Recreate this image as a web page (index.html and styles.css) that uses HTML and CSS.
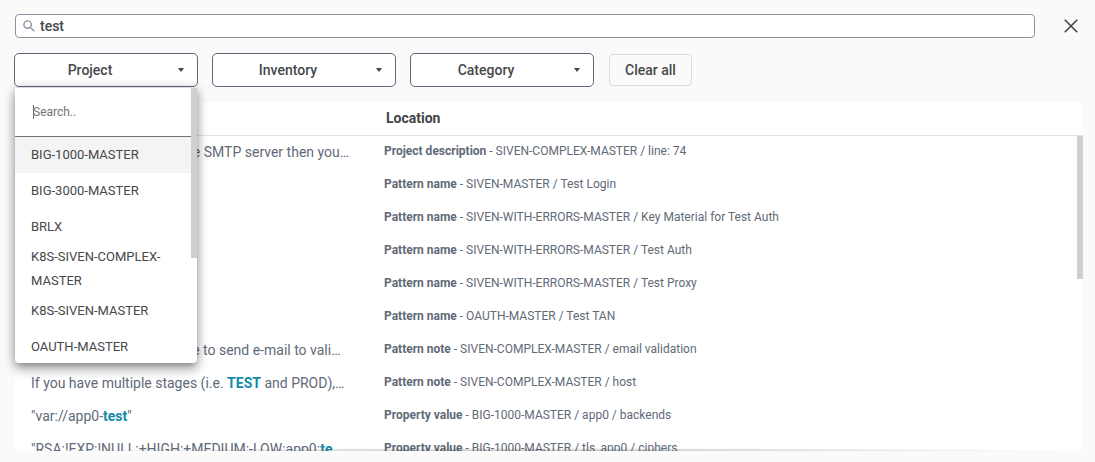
FILE: index.html
```html
<!DOCTYPE html>
<html lang="en">
<head>
<meta charset="utf-8">
<title>Search results</title>
<link rel="stylesheet" href="styles.css">
</head>
<body>
<main class="page">
  <div class="search-row">
    <label class="search-box">
      <svg class="search-icon" viewBox="0 0 12 12" aria-hidden="true"><circle cx="4.6" cy="4.6" r="3.7"/><path d="M7.4 7.4L11.4 11.2"/></svg>
      <input class="search-input" type="text" value="test" aria-label="Search">
    </label>
    <button class="close" type="button" aria-label="Close">
      <svg viewBox="0 0 14 14" aria-hidden="true"><path d="M.8 .8L13.2 13.2M13.2 .8L.8 13.2"/></svg>
    </button>
  </div>

  <div class="filters">
    <div class="filter">
      <button class="filter-button" type="button" aria-expanded="true"><span class="filter-label">Project</span><span class="arrow"></span></button>
      <div class="menu">
        <label class="menu-search"><input class="menu-input" type="text" placeholder="Search.." aria-label="Search projects"></label>
        <ul class="menu-list">
          <li class="menu-item active">BIG-1000-MASTER</li>
          <li class="menu-item">BIG-3000-MASTER</li>
          <li class="menu-item">BRLX</li>
          <li class="menu-item">K8S-SIVEN-COMPLEX-MASTER</li>
          <li class="menu-item">K8S-SIVEN-MASTER</li>
          <li class="menu-item">OAUTH-MASTER</li>
        </ul>
        <span class="menu-thumb"></span>
      </div>
    </div>
    <div class="filter"><button class="filter-button" type="button"><span class="filter-label">Inventory</span><span class="arrow"></span></button></div>
    <div class="filter"><button class="filter-button" type="button"><span class="filter-label">Category</span><span class="arrow"></span></button></div>
    <button class="clear" type="button">Clear all</button>
  </div>

  <section class="card">
    <table class="results">
      <thead><tr><th class="match"></th><th>Location</th></tr></thead>
      <tbody>
        <tr><td class="match">If you want to configure the SMTP server then you…</td><td><b>Project description</b> - SIVEN-COMPLEX-MASTER / line: 74</td></tr>
        <tr><td class="match"></td><td><b>Pattern name</b> - SIVEN-MASTER / Test Login</td></tr>
        <tr><td class="match"></td><td><b>Pattern name</b> - SIVEN-WITH-ERRORS-MASTER / Key Material for Test Auth</td></tr>
        <tr><td class="match"></td><td><b>Pattern name</b> - SIVEN-WITH-ERRORS-MASTER / Test Auth</td></tr>
        <tr><td class="match"></td><td><b>Pattern name</b> - SIVEN-WITH-ERRORS-MASTER / Test Proxy</td></tr>
        <tr><td class="match"></td><td><b>Pattern name</b> - OAUTH-MASTER / Test TAN</td></tr>
        <tr><td class="match">This test server will be able to send e-mail to vali…</td><td><b>Pattern note</b> - SIVEN-COMPLEX-MASTER / email validation</td></tr>
        <tr><td class="match">If you have multiple stages (i.e. <mark>TEST</mark> and PROD),…</td><td><b>Pattern note</b> - SIVEN-COMPLEX-MASTER / host</td></tr>
        <tr><td class="match">"var://app0-<mark>test</mark>"</td><td><b>Property value</b> - BIG-1000-MASTER / app0 / backends</td></tr>
        <tr><td class="match">"RSA:!EXP:!NULL:+HIGH:+MEDIUM:-LOW:app0:<mark>te</mark></td><td><b>Property value</b> - BIG-1000-MASTER / tls_app0 / ciphers</td></tr>
      </tbody>
    </table>
    <span class="card-thumb"></span>
    <span class="card-fade"></span>
  </section>
</main>
</body>
</html>
```
FILE: styles.css
```css
* { box-sizing: border-box; }
body {
  margin: 0;
  background: #fafafa;
  color: #46484a;
  font-family: Roboto, "Liberation Sans", sans-serif;
  font-size: 14px;
}
button, input { font: inherit; color: inherit; }
.page {
  display: flex;
  flex-direction: column;
  height: 100vh;
  padding: 14px 12px 11px 14px;
}
.search-row {
  display: flex;
  align-items: center;
  gap: 29px;
  padding: 0 5px 0 1px;
}
.search-box {
  display: flex;
  flex: 1;
  align-items: center;
  gap: 5px;
  height: 24px;
  padding: 0 7px;
  background: #fff;
  border: 1px solid #8b94a1;
  border-radius: 4px;
}
.search-icon {
  width: 12px;
  height: 12px;
  fill: none;
  stroke: #8b94a1;
  stroke-width: 1.4;
}
.search-input {
  flex: 1;
  min-width: 0;
  padding: 0;
  border: 0;
  outline: 0;
  background: none;
  font-weight: 500;
}
.close {
  display: flex;
  padding: 0;
  border: 0;
  background: none;
}
.close svg {
  width: 14px;
  height: 14px;
  fill: none;
  stroke: #424446;
  stroke-width: 1.6;
}
.filters {
  display: flex;
  align-items: center;
  gap: 14px;
  margin: 15px 0;
}
.filter { position: relative; }
.filter-button {
  display: flex;
  align-items: center;
  width: 184px;
  height: 34px;
  padding: 0 13px 0 0;
  background: #fff;
  border: 1px solid #5f6979;
  border-radius: 5px;
  font-weight: 500;
}
.filter-label {
  flex: 1;
  padding-right: 13px;
  text-align: center;
}
.arrow {
  border: 3px solid transparent;
  border-top: 4px solid #424446;
  border-bottom: 0;
}
.clear {
  height: 32px;
  margin-left: 1px;
  padding: 0 15px;
  background: #fafafa;
  border: 1px solid #dcdcdc;
  border-radius: 4px;
  font-weight: 500;
}
.menu {
  position: absolute;
  z-index: 2;
  top: 35px;
  left: 1px;
  width: 182px;
  height: 275px;
  overflow: hidden;
  background: #fff;
  border-radius: 0 0 4px 4px;
  box-shadow: 0 5px 5px -3px rgba(0, 0, 0, .2), 0 8px 10px 1px rgba(0, 0, 0, .14), 0 3px 14px 2px rgba(0, 0, 0, .12), 0 1px 10px rgba(0, 0, 0, .2);
}
.menu-search {
  position: relative;
  display: flex;
  height: 49px;
  margin-right: 6px;
  padding: 0 18px;
  border-bottom: 1px solid #757575;
}
.menu-search::before {
  content: "";
  position: absolute;
  top: 17px;
  left: 18px;
  width: 1px;
  height: 14px;
  background: #6c6e70;
}
.menu-input {
  width: 100%;
  padding: 0;
  border: 0;
  outline: 0;
  background: none;
  font-size: 12px;
}
.menu-input::placeholder { color: #757575; }
.menu-list {
  margin: 0 6px 0 0;
  padding: 0;
  list-style: none;
}
.menu-item {
  display: flex;
  align-items: center;
  min-height: 36px;
  padding: 0 16px;
  font-size: 13px;
  line-height: 24px;
}
.active { background: #f4f4f4; }
.menu-thumb {
  position: absolute;
  top: 0;
  right: 0;
  width: 6px;
  height: 170px;
  background: #cfcfcf;
}
.card {
  position: relative;
  flex: 1;
  min-height: 0;
  margin-left: 1px;
  overflow: hidden;
  background: #fff;
  border-radius: 5px;
}
.results {
  width: 100%;
  table-layout: fixed;
  border-collapse: separate;
  border-spacing: 0;
  color: #616a77;
}
.results th {
  height: 34px;
  padding: 0 2px 2px;
  border-bottom: 1px solid #e2e2e2;
  color: #424446;
  font-weight: 700;
  text-align: left;
}
.results td {
  height: 33px;
  padding: 0 0 4px;
  font-size: 12px;
  white-space: nowrap;
}
.results .match {
  width: 369px;
  padding: 0 28px 2px 16px;
  overflow: hidden;
  font-size: 14px;
  text-overflow: ellipsis;
}
.results mark {
  background: none;
  color: #148ca8;
  font-weight: 700;
}
.card-thumb {
  position: absolute;
  top: 34px;
  right: 0;
  width: 6px;
  height: 143px;
  background: #cfcfcf;
}
.card-fade {
  position: absolute;
  right: 0;
  bottom: 0;
  left: 0;
  height: 3px;
  background: radial-gradient(farthest-side at 50% 100%, rgba(0, 0, 0, .25), transparent);
}
```
